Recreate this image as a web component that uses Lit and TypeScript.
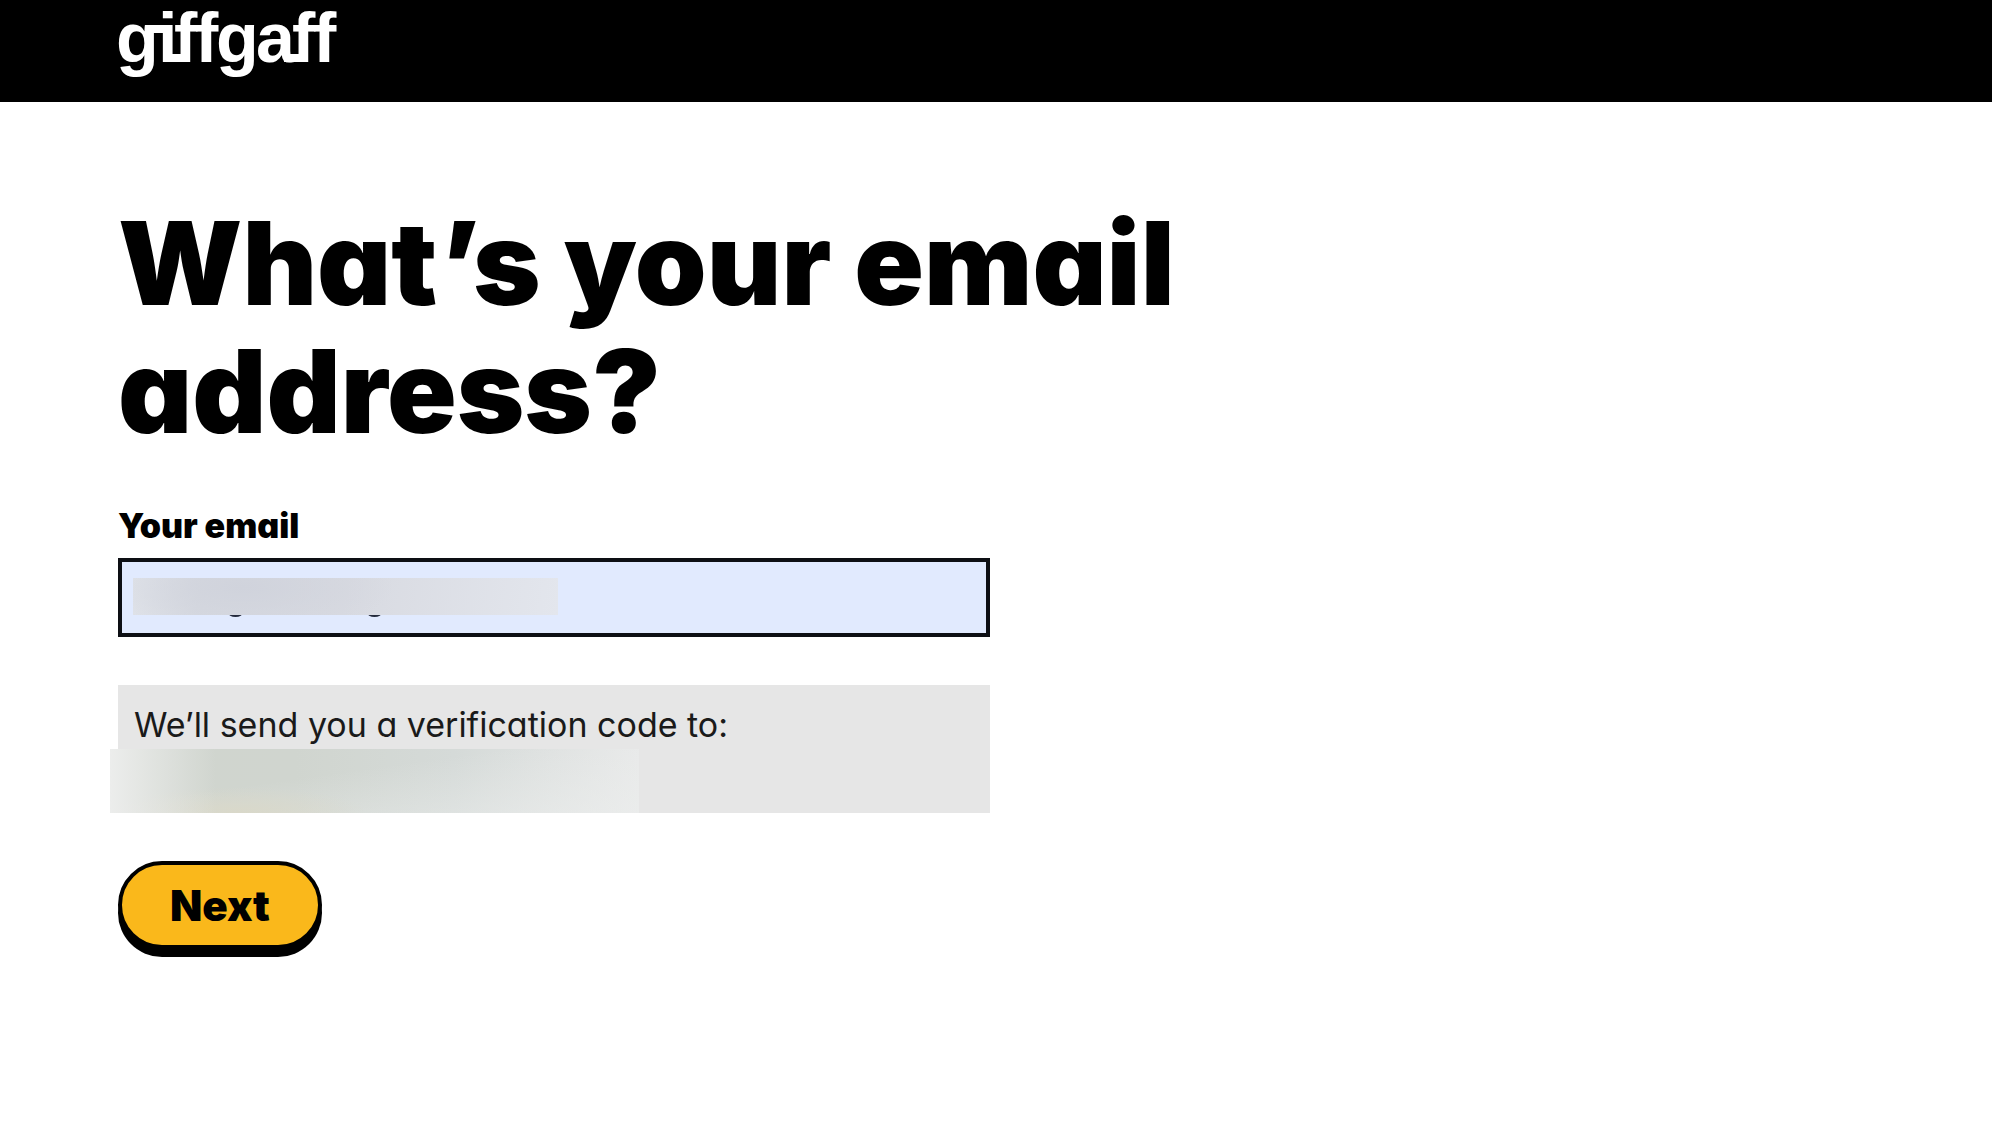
import { LitElement, html, css } from "lit";
import { customElement } from "lit/decorators.js";

@customElement("brand-logo")
export class BrandLogo extends LitElement {
  static styles = css`
    :host {
      display: block;
    }
    .mark {
      display: block;
      width: 222px;
      height: 80px;
      overflow: visible;
      fill: #fff;
      font-family: "Liberation Sans", Arial, sans-serif;
      font-size: 70px;
      font-weight: 700;
    }
  `;

  render() {
    return html`
      <svg class="mark" viewBox="0 0 222 80" role="img" aria-label="giffgaff">
        <text y="62" x="-2 40 56 77 98 138 174 195">giffgaff</text>
        <rect x="30" y="25" width="24" height="8" />
        <rect x="45" y="54" width="26" height="8" />
        <rect x="166" y="54" width="23" height="8" />
      </svg>
    `;
  }
}

@customElement("app-root")
export class AppRoot extends LitElement {
  static styles = css`
    :host {
      display: block;
      min-height: 100vh;
      background: #fff;
      color: #000;
      font-family: Inter, "Open Sans", "Liberation Sans", sans-serif;
      font-feature-settings: "cv11";
    }
    *,
    *::before,
    *::after {
      box-sizing: border-box;
    }
    .header {
      background: #000;
      padding: 0 118px 22px;
    }
    .home {
      display: inline-block;
      vertical-align: top;
    }
    .main {
      padding: 98px 118px;
    }
    .title {
      margin: 0 0 46px;
      max-width: 1120px;
      font-size: 115px;
      line-height: 128px;
      font-weight: 900;
    }
    .form {
      display: flex;
      flex-direction: column;
      align-items: flex-start;
      gap: 48px;
      max-width: 872px;
    }
    .field {
      display: flex;
      flex-direction: column;
      gap: 8px;
      width: 100%;
    }
    .label {
      font-size: 34px;
      line-height: 48px;
      font-weight: 900;
    }
    .control {
      position: relative;
    }
    .input {
      display: block;
      width: 100%;
      height: 79px;
      margin: 0;
      padding: 0 16px;
      border: 4px solid #0d0f14;
      border-radius: 0;
      outline: none;
      background: #e1eafe;
      color: #000;
      font: inherit;
      font-size: 34px;
    }
    .tail {
      position: absolute;
      top: 50px;
      width: 15px;
      height: 9px;
      border-radius: 50%;
      background: #242a3c;
    }
    .tail-a {
      left: 110px;
    }
    .tail-b {
      left: 249px;
    }
    .mask {
      position: absolute;
      left: 15px;
      top: 20px;
      width: 425px;
      height: 37px;
      background: radial-gradient(
          ellipse 150px 48px at 26% 25%,
          #d0d3dc,
          rgba(208, 211, 220, 0)
        ),
        linear-gradient(100deg, #e1e4ea 0%, #d6d9e0 16%, #d8dae1 50%, #e3e6ed 100%);
    }
    .notice {
      position: relative;
      width: 100%;
      min-height: 128px;
      padding: 16px;
      background: #e6e6e6;
      font-size: 34px;
      line-height: 48px;
      color: #1a1a1a;
    }
    .text {
      margin: 0;
    }
    .veil {
      position: absolute;
      left: -8px;
      bottom: 0;
      width: 529px;
      height: 64px;
      background: linear-gradient(90deg, #ecedec 0%, rgba(236, 237, 236, 0) 20%),
        radial-gradient(
          ellipse 130px 26px at 24% 100%,
          #d9d8c9,
          rgba(217, 216, 201, 0)
        ),
        linear-gradient(
          172deg,
          rgba(236, 238, 237, 0) 40%,
          rgba(236, 238, 237, 0.6) 100%
        ),
        linear-gradient(90deg, #d0d5ce 0%, #d0d5cf 35%, #d5dad8 65%, #e8e9e9 100%);
    }
    .next {
      height: 88px;
      margin: 0;
      padding: 0 48px;
      border: 4px solid #000;
      border-radius: 44px;
      background: #fab81b;
      box-shadow: 0 8px 0 #000;
      color: #000;
      font: inherit;
      font-feature-settings: inherit;
      font-size: 42px;
      font-weight: 900;
      cursor: pointer;
    }
  `;

  private submit(event: Event) {
    event.preventDefault();
  }

  render() {
    return html`
      <header class="header">
        <a class="home" href="#" aria-label="giffgaff"><brand-logo></brand-logo></a>
      </header>
      <main class="main">
        <h1 class="title">What’s your email address?</h1>
        <form class="form" novalidate @submit=${this.submit}>
          <div class="field">
            <label class="label" for="email">Your email</label>
            <div class="control">
              <input class="input" id="email" type="email" autocomplete="email" />
              <span class="tail tail-a"></span>
              <span class="tail tail-b"></span>
              <span class="mask"></span>
            </div>
          </div>
          <div class="notice">
            <p class="text">We’ll send you a verification code to:</p>
            <span class="veil"></span>
          </div>
          <button class="next" type="submit">Next</button>
        </form>
      </main>
    `;
  }
}
